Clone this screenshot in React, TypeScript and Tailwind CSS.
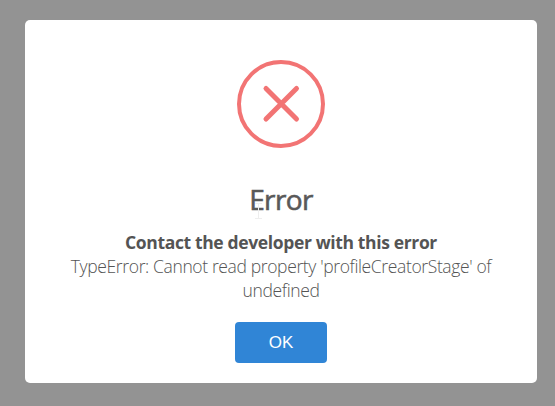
import React from "react";

export default function App() {
  return (
    <div className="h-[406px] w-[555px] overflow-hidden bg-[#939393] pt-5 pl-[25px] font-['Open_Sans',sans-serif]">
      <div className="flex h-[363px] w-[512px] flex-col items-center rounded-[5px] bg-white pt-10 text-[#545454]">
        <svg width="88" height="88" viewBox="0 0 88 88" fill="none" stroke="#f27474">
          <circle cx="44" cy="44" r="42" strokeWidth="4" />
          <path d="M29 28.500L59.500 59M59.500 28.500L29 59" strokeWidth="5" strokeLinecap="round" />
        </svg>
        <h2 className="relative mt-[29px] mb-px text-[28px] leading-[44px] tracking-[-0.6px] whitespace-nowrap text-[#595959] [-webkit-text-stroke:0.6px_#595959]">
          Error
          <svg className="absolute top-[26px] left-[6px]" width="7" height="16" viewBox="0 0 7 16" fill="none" stroke="#eeeeee">
            <path d="M0 .5H7M3.500 .5V15.500M0 15.500H7" />
          </svg>
        </h2>
        <div className="mt-[8px] text-center text-[17.5px] leading-6 whitespace-nowrap">
          <div className="font-bold tracking-[-0.36px]">Contact the developer with this error</div>
          <div className="font-light tracking-[-0.37px]">TypeError: Cannot read property 'profileCreatorStage' of</div>
          <div className="font-light tracking-[-0.37px]">undefined</div>
        </div>
        <button className="mt-[20px] h-[41px] w-[92px] rounded-[4px] bg-[#3085d6] font-['Liberation_Sans',sans-serif] text-[17px] text-white">OK</button>
      </div>
    </div>
  );
}
